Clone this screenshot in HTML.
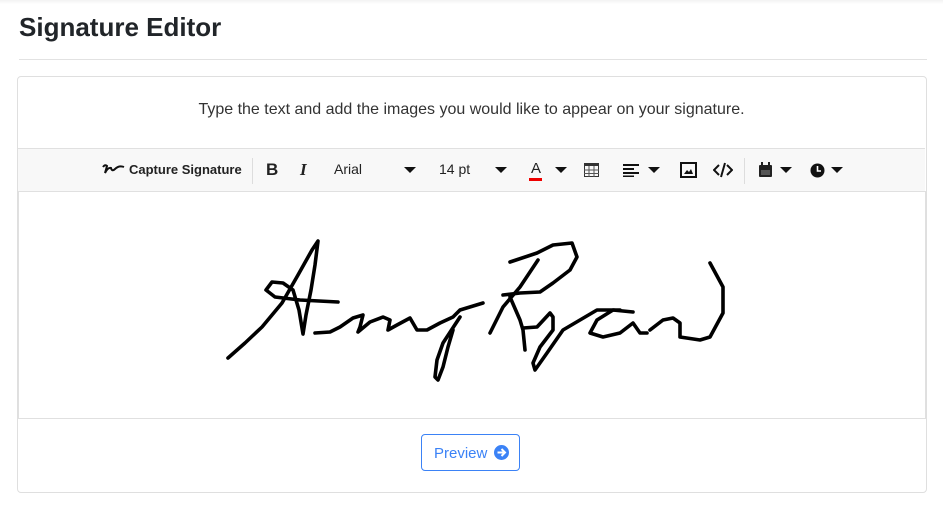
<!DOCTYPE html>
<html><head><style>
body{margin:0;width:943px;height:509px;background:#fff;font-family:"Liberation Sans",sans-serif;position:relative;overflow:hidden}
.top{position:absolute;left:0;top:0;width:943px;height:4px;background:linear-gradient(#f3f3f3,#fff)}
h1{position:absolute;left:19px;top:12px;margin:0;font-size:26px;font-weight:bold;color:#212529;font-family:"Liberation Sans",sans-serif;letter-spacing:0px}
.hr{position:absolute;left:19px;top:59px;width:908px;height:1px;background:#e2e2e2}
.card{position:absolute;left:17px;top:76px;width:908px;height:415px;border:1px solid #dfdfdf;border-radius:4px}
.inst{position:absolute;left:0;width:100%;top:101px;text-align:center;font-size:16px;color:#333}
.tb{position:absolute;left:18px;top:148px;width:907px;height:42px;background:#f8f8f8;border-top:1px solid #e0e0e0;border-bottom:1px solid #e0e0e0;font-family:"Liberation Sans",sans-serif;font-size:14px;color:#222}
.tb span{position:absolute;top:12px}
.ed{position:absolute;left:18px;top:191px;width:906px;height:227px;border-left:1px solid #e0e0e0;border-right:1px solid #e0e0e0;border-bottom:1px solid #e0e0e0}
.btn{position:absolute;left:421px;top:434px;width:99px;height:37px;border:1px solid #3b82f6;border-radius:4px;color:#3b82f6;font-size:15px;box-sizing:border-box;padding:10px 0 0 12px}
.tri{position:absolute;top:18px;width:0;height:0;border-left:6px solid transparent;border-right:6px solid transparent;border-top:6px solid #111}
.sep{position:absolute;top:9px;width:1px;height:26px;background:#ddd}
</style></head><body>
<div class="top"></div>
<h1>Signature Editor</h1>
<div class="hr"></div>
<div class="card"></div>
<div class="inst">Type the text and add the images you would like to appear on your signature.</div>
<div class="tb">
<svg style="position:absolute;left:84px;top:14px" width="24" height="12" viewBox="0 0 24 12"><path d="M1,4 Q3,1 5,3 L3,10 Q6,4 9,5 Q10,9 13,6 Q17,2 22,4" fill="none" stroke="#111" stroke-width="2"/></svg>
<span style="left:111px;font-size:13px;font-weight:bold;color:#222;top:13px">Capture Signature</span>
<div class="sep" style="left:234px"></div>
<span style="left:248px;font-weight:bold;font-size:17px;top:11px">B</span>
<span style="left:282px;font-style:italic;font-weight:bold;font-size:17px;top:11px;font-family:'Liberation Serif',serif">I</span>
<span style="left:316px">Arial</span>
<div class="tri" style="left:386px"></div>
<span style="left:421px">14 pt</span>
<div class="tri" style="left:477px"></div>
<span style="left:513px;top:11px;font-size:15px">A</span>
<div style="position:absolute;left:511px;top:29px;width:13px;height:3px;background:#e00"></div>
<div class="tri" style="left:537px"></div>
<svg style="position:absolute;left:566px;top:14px" width="15" height="14"><rect x="0.5" y="0.5" width="14" height="13" fill="none" stroke="#333"/><rect x="0" y="0" width="15" height="3" fill="#333"/><path d="M5,3V14M10,3V14M0,7H15M0,10.5H15" stroke="#555"/></svg>
<svg style="position:absolute;left:605px;top:15px" width="16" height="13"><path d="M0,1H16M0,5H11M0,9H16M0,12.5H11" stroke="#111" stroke-width="2"/></svg>
<div class="tri" style="left:630px"></div>
<svg style="position:absolute;left:662px;top:13px" width="17" height="16"><rect x="1" y="1" width="15" height="14" fill="none" stroke="#111" stroke-width="2"/><path d="M4,12L7,8L9,10L11,7L13,12Z" fill="#111"/></svg>
<svg style="position:absolute;left:695px;top:13px" width="20" height="16"><path d="M6,3L1,8L6,13M14,3L19,8L14,13M12,1L8,15" fill="none" stroke="#111" stroke-width="2"/></svg>
<div class="sep" style="left:726px"></div>
<svg style="position:absolute;left:740px;top:13px" width="15" height="16"><rect x="1" y="3" width="13" height="12" rx="1" fill="#222"/><rect x="3" y="0" width="2" height="4" fill="#222"/><rect x="10" y="0" width="2" height="4" fill="#222"/><rect x="3" y="8" width="9" height="5" fill="#555"/></svg>
<div class="tri" style="left:762px"></div>
<svg style="position:absolute;left:792px;top:14px" width="15" height="15"><circle cx="7.5" cy="7.5" r="7" fill="#111"/><path d="M7.5,3V8H11" stroke="#fff" stroke-width="1.6" fill="none"/></svg>
<div class="tri" style="left:813px"></div>
</div>
<div class="ed"></div>
<svg style="position:absolute;left:0;top:0" width="943" height="509"><g fill="none" stroke="#000" stroke-width="3.6" stroke-linecap="round" stroke-linejoin="round">
<path d="M228,358 L245,343 L262,327 L282,303 L298,275 L312,250 L318,241 L315,265 L311,290 L306,315 L303,334 L299,310 L293,290 L283,283 L272,282 L266,290 L275,297 L300,300 L338,302"/>
<path d="M315,333 L330,332 L340,327 L353,318 L363,315 L360,327 L358,332 L370,322 L383,317 L390,320 L388,330 L397,325 L410,318 L417,330 L427,330 L440,323 L453,317 L460,310 L483,303"/>
<path d="M460,317 L443,343 L437,360 L435,377 L438,380 L443,367 L448,347 L453,330"/>
<path d="M538,260 L520,287 L503,307 L490,333"/>
<path d="M510,262 L537,253 L553,245 L572,243 L577,257 L570,270 L553,283 L540,292 L520,293 L503,295"/>
<path d="M510,297 L520,320 L523,330 L525,350"/>
<path d="M523,328 L537,327 L550,313 L553,317 L553,330 L540,347 L533,363 L535,370 L547,353 L563,330 L580,320 L597,310 L620,310"/>
<path d="M633,312 L613,310 L597,320 L590,333 L603,337 L620,333 L633,323 L640,333 L647,333"/>
<path d="M650,330 L663,320 L673,318 L680,323 L680,337 L700,340 L710,337 L723,313 L723,287 L710,263"/>
</g></svg>
<div class="btn">Preview <svg style="vertical-align:-2px;margin-left:2px" width="15" height="15"><circle cx="7.5" cy="7.5" r="7.5" fill="#3b82f6"/><path d="M3.5,7.5H11M7.5,4L11,7.5L7.5,11" stroke="#fff" stroke-width="2" fill="none"/></svg></div>
</body></html>
